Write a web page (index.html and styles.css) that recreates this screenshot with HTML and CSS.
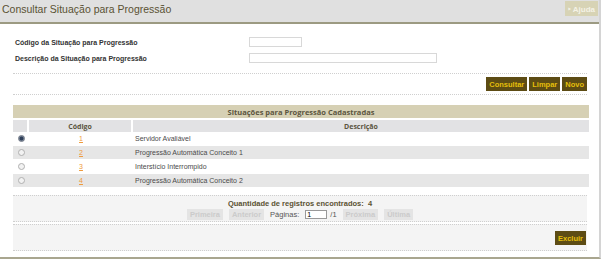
FILE: index.html
```html
<!DOCTYPE html>
<html lang="pt-BR">
<head>
    <meta charset="UTF-8">
    <title>Consultar Situação para Progressão</title>
    <link rel="stylesheet" href="styles.css">
</head>
<body>
    <div class="pagina">
        <div class="cabecalho">
            <h1>Consultar Situação para Progressão</h1>
            <span class="ajuda">&#8227; Ajuda</span>
        </div>

        <div class="conteudo">
            <div class="filtros">
                <label>Código da Situação para Progressão</label>
                <input type="text" class="campo-curto">
                <label>Descrição da Situação para Progressão</label>
                <input type="text" class="campo-longo">
            </div>

            <div class="acoes">
                <button class="botao">Consultar</button>
                <button class="botao">Limpar</button>
                <button class="botao">Novo</button>
            </div>

            <table class="lista">
                <tr>
                    <th colspan="3" class="titulo-tabela">Situações para Progressão Cadastradas</th>
                </tr>
                <tr class="colunas">
                    <th class="col-radio"></th>
                    <th class="col-codigo">Código</th>
                    <th>Descrição</th>
                </tr>
                <tr>
                    <td><input type="radio" name="sel" checked></td>
                    <td class="codigo"><a href="#">1</a></td>
                    <td>Servidor Avaliável</td>
                </tr>
                <tr class="par">
                    <td><input type="radio" name="sel"></td>
                    <td class="codigo"><a href="#">2</a></td>
                    <td>Progressão Automática Conceito 1</td>
                </tr>
                <tr>
                    <td><input type="radio" name="sel"></td>
                    <td class="codigo"><a href="#">3</a></td>
                    <td>Interstício Interrompido</td>
                </tr>
                <tr class="par">
                    <td><input type="radio" name="sel"></td>
                    <td class="codigo"><a href="#">4</a></td>
                    <td>Progressão Automática Conceito 2</td>
                </tr>
            </table>

            <div class="paginacao">
                <p class="total">Quantidade de registros encontrados:&nbsp; 4</p>
                <div class="navegacao">
                    <span class="nav-desab">Primeira</span>
                    <span class="nav-desab">Anterior</span>
                    <span>Páginas:</span>
                    <input type="text" class="campo-pagina" value="1">
                    <span>/1</span>
                    <span class="nav-desab">Próxima</span>
                    <span class="nav-desab">Última</span>
                </div>
            </div>

            <div class="rodape">
                <button class="botao">Excluir</button>
            </div>
        </div>
    </div>
</body>
</html>
```

FILE: styles.css
```css
body {
    margin: 0;
    font-family: "Liberation Sans", Arial, sans-serif;
    background: #ffffff;
    color: #333;
}
.pagina {
    width: 599px;
    height: 257px;
    border-right: 2px solid #d4d4d4;
    border-bottom: 2px solid #a9a68f;
}
.cabecalho {
    height: 22px;
    background-color: #e0e0e0;
    border-bottom: 2px solid #9c9a82;
    display: flex;
    justify-content: space-between;
    align-items: flex-start;
}
.cabecalho h1 {
    margin: 0;
    padding: 3px 0 0 2px;
    font-size: 10.5px;
    font-weight: normal;
    color: #5a5233;
}
.ajuda {
    margin: 1px 1px 0 0;
    background-color: #d7d3b5;
    color: #f4f2e6;
    font-size: 8px;
    font-weight: bold;
    padding: 2px 3px 2px;
}
.conteudo {
    padding: 13px 12px 0 13px;
}
.filtros {
    display: grid;
    grid-template-columns: 234px auto;
    row-gap: 6px;
    align-items: center;
    padding: 0 0 10px 2px;
    border-bottom: 1px dotted #cfcfcf;
}
.filtros label {
    font-size: 7px;
    font-weight: bold;
    color: #333;
}
.filtros input {
    height: 8px;
    border: 1px solid #d8d8d8;
    padding: 0;
}
.campo-curto {
    width: 51px;
}
.campo-longo {
    width: 186px;
}
.acoes {
    display: flex;
    justify-content: flex-end;
    gap: 2px;
    padding: 3px 0 3px 0;
    border-bottom: 1px dotted #cfcfcf;
    margin-bottom: 10px;
}
.botao {
    background-color: #5d4c14;
    color: #e5bf0a;
    border: none;
    font-family: "Liberation Sans", Arial, sans-serif;
    font-size: 7.5px;
    font-weight: bold;
    padding: 3px 3px;
    height: 14px;
}
.lista {
    width: 576px;
    border-collapse: separate;
    border-spacing: 0;
    font-size: 7px;
}
.lista th {
    font-weight: bold;
    color: #5b5540;
    padding: 0;
}
.titulo-tabela {
    background-color: #d6d0b4;
    height: 13px;
    font-family: "Open Sans", sans-serif;
    font-size: 7.5px;
    border-bottom: 2px solid #ffffff;
}
.colunas th {
    background-color: #e2e2e4;
    height: 12px;
    border-right: 2px solid #ffffff;
    font-family: "Open Sans", sans-serif;
    font-size: 7px;
}
.colunas th:last-child {
    border-right: none;
}
.col-radio {
    width: 14px;
}
.col-codigo {
    width: 102px;
}
.lista td {
    height: 13px;
    padding: 0;
    color: #4a4a4a;
    border-bottom: 1px solid #ffffff;
}
.lista td:first-child {
    text-align: center;
}
.lista td:last-child {
    padding-left: 2px;
}
.lista tr.par td {
    background-color: #e6e6e6;
}
.lista input[type="radio"] {
    appearance: none;
    -webkit-appearance: none;
    width: 7px;
    height: 7px;
    margin: 0;
    border: 1px solid #b0b0b0;
    border-radius: 50%;
    background-color: #f2f2f2;
    vertical-align: middle;
}
.lista input[type="radio"]:checked {
    background: radial-gradient(circle, #2f3f5a 45%, #8c97a8 70%);
    border-color: #6c7482;
}
.codigo {
    text-align: center;
}
.codigo a {
    color: #ef9a3c;
}
.paginacao {
    margin-top: 7px;
    border-top: 1px dotted #cfcfcf;
    border-bottom: 1px dotted #cfcfcf;
    background-color: #f4f4f4;
    height: 25px;
    font-size: 7.5px;
    text-align: center;
}
.total {
    margin: 3px 0 1px;
    font-weight: bold;
    color: #5b5233;
}
.navegacao {
    display: flex;
    justify-content: center;
    align-items: center;
    gap: 6px;
    color: #555;
}
.nav-desab {
    background-color: #e4e4e4;
    color: #cbcbcb;
    font-weight: bold;
    padding: 1px 3px;
}
.campo-pagina {
    width: 18px;
    height: 7px;
    font-size: 7px;
    padding: 0 1px;
    border: 1px solid #999;
    margin-right: -3px;
}
.rodape {
    margin-top: 2px;
    border-top: 1px dotted #cfcfcf;
    border-bottom: 1px dotted #cfcfcf;
    background-color: #f4f4f4;
    height: 25px;
    display: flex;
    justify-content: flex-end;
    align-items: center;
    padding-right: 1px;
}
```
